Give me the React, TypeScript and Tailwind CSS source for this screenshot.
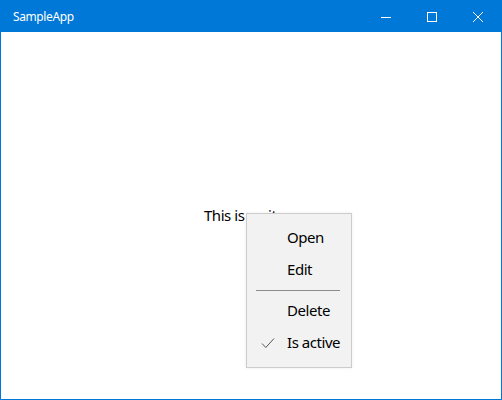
import React from "react";

const font = { fontFamily: '"Segoe UI", "Noto Sans", "Open Sans", sans-serif' };

function MenuItem({ label, checked }: { label: string; checked?: boolean }) {
  return (
    <div className="relative h-[32px] flex items-center pl-[40px] text-[15px] text-black leading-none tracking-[-0.45px]">
      {checked && (
        <svg className="absolute left-[14px] top-[10px]" width="14" height="12" viewBox="0 0 14 12">
          <path d="M1 6.5 L4.8 10.5 L13 1.5" fill="none" stroke="#555" strokeWidth="1" />
        </svg>
      )}
      <span className="-mt-[1px]">{label}</span>
    </div>
  );
}

export default function App() {
  return (
    <div className="w-[502px] h-[400px] border border-[#0078d7] flex flex-col bg-white" style={font}>
      <div className="h-[31px] bg-[#0078d7] flex items-center text-white shrink-0">
        <div className="pl-[12px] text-[12px] flex-1 tracking-[-0.4px]">SampleApp</div>
        <div className="w-[46px] h-full flex items-center justify-center">
          <div className="w-[10px] h-[1px] bg-white mt-[1px]" />
        </div>
        <div className="w-[46px] h-full flex items-center justify-center">
          <div className="w-[10px] h-[10px] border border-white" />
        </div>
        <div className="w-[46px] h-full flex items-center justify-center">
          <svg width="10" height="10" viewBox="0 0 10 10">
            <path d="M0 0 L10 10 M10 0 L0 10" stroke="white" strokeWidth="1" />
          </svg>
        </div>
      </div>
      <div className="relative flex-1 flex items-center justify-center">
        <span className="text-[15px] text-black tracking-[-0.45px]">This is an item</span>
        <div className="absolute left-[245px] top-[181px] w-[106px] bg-[#f2f2f2] border border-[#cccccc] shadow-[0_0_3px_rgba(0,0,0,0.08)] py-[8px]">
          <MenuItem label="Open" />
          <MenuItem label="Edit" />
          <div className="h-[9px] flex items-center pl-[9px] pr-[11px]">
            <div className="h-[1px] w-full bg-[#8c8c8c]" />
          </div>
          <MenuItem label="Delete" />
          <MenuItem label="Is active" checked />
        </div>
      </div>
    </div>
  );
}
